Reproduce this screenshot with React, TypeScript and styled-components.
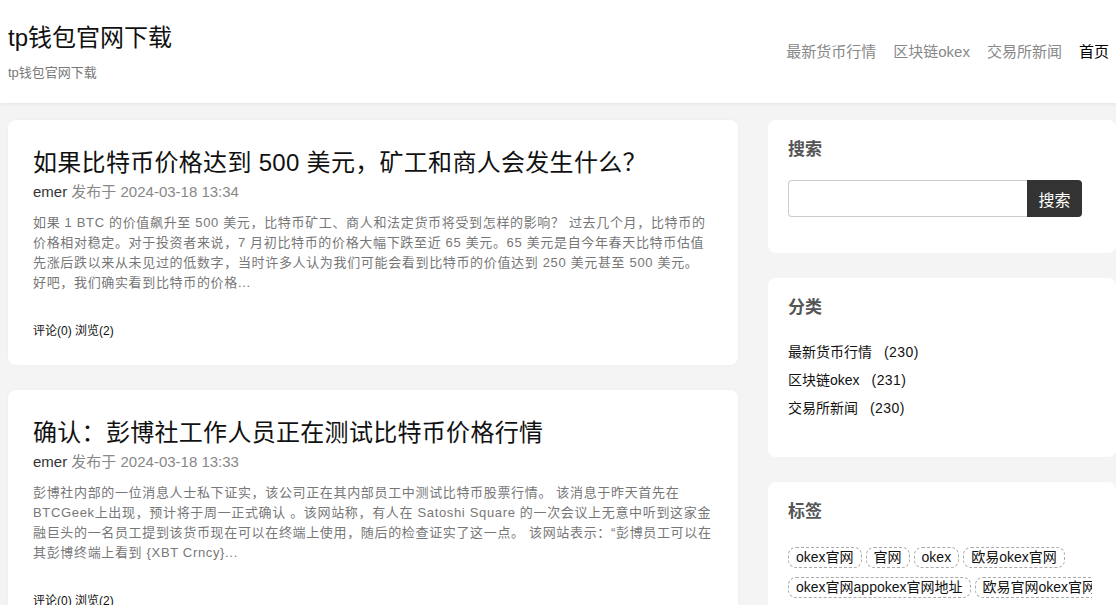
import * as React from "react";
import styled, { createGlobalStyle } from "styled-components";

const GlobalStyle = createGlobalStyle`
  html, body {
    margin: 0;
    padding: 0;
    background: #f4f4f4;
    font-family: "Liberation Sans", Arial, "Noto Sans CJK SC", sans-serif;
    color: #333;
  }
  * {
    box-sizing: border-box;
  }
`;

const Header = styled.header`
  display: flex;
  justify-content: space-between;
  align-items: center;
  height: 103px;
  padding: 0 7px 0 8px;
  background: #fff;
  box-shadow: 0 1px 4px rgba(0, 0, 0, 0.08);
`;

const Brand = styled.div`
  display: flex;
  flex-direction: column;
`;

const SiteTitle = styled.h1`
  margin: 0;
  font-size: 24px;
  font-weight: 400;
  line-height: 36px;
  color: #111;
`;

const SiteDesc = styled.p`
  margin: 7px 0 0;
  font-size: 13px;
  line-height: 20px;
  color: #777;
`;

const Nav = styled.nav`
  display: flex;
  gap: 17px;
  margin-top: 1px;
`;

const NavLink = styled.a<{ $active?: boolean }>`
  font-size: 15px;
  line-height: 20px;
  color: ${(p) => (p.$active ? "#000" : "#888")};
  text-decoration: none;
`;

const Layout = styled.div`
  display: grid;
  grid-template-columns: 730px 348px;
  gap: 30px;
  padding: 17px 0 0 8px;
`;

const Column = styled.div`
  display: flex;
  flex-direction: column;
  gap: 25px;
`;

const Card = styled.article`
  background: #fff;
  border-radius: 8px;
  padding: 25px 25px 26px;
  box-shadow: 0 0 4px rgba(0, 0, 0, 0.03);
`;

const PostTitle = styled.h2`
  margin: 0;
  font-size: 24px;
  font-weight: 400;
  letter-spacing: 0.3px;
  line-height: 36px;
  color: #111;
`;

const Meta = styled.div`
  font-size: 15px;
  line-height: 22px;
  color: #888;
`;

const Author = styled.span`
  color: #333;
`;

const Excerpt = styled.p`
  margin: 10px 0 0;
  font-size: 13px;
  letter-spacing: 0.66px;
  line-height: 20px;
  color: #777;
`;

const PostFooter = styled.div`
  margin-top: 30px;
  font-size: 12px;
  line-height: 16px;
  color: #111;
`;

const Widget = styled.section<{ $bottom?: number }>`
  background: #fff;
  border-radius: 8px;
  padding: 20px 20px ${(p) => p.$bottom ?? 35}px;
  overflow: hidden;
`;

const WidgetTitle = styled.h3`
  margin: 0;
  font-size: 17px;
  font-weight: 700;
  line-height: 20px;
  color: #555;
`;

const SearchForm = styled.form`
  display: flex;
  margin-top: 20px;
`;

const SearchInput = styled.input`
  width: 239px;
  height: 37px;
  border: 1px solid #ccc;
  border-right: none;
  border-radius: 4px 0 0 4px;
  outline: none;
  padding: 0 8px;
  font-size: 14px;
`;

const SearchButton = styled.button`
  width: 55px;
  height: 37px;
  border: none;
  border-radius: 0 4px 4px 0;
  background: #333;
  color: #fff;
  font-size: 16px;
  font-family: inherit;
  padding: 0;
`;

const CatList = styled.ul`
  list-style: none;
  margin: 20px 0 0;
  padding: 0;
`;

const CatItem = styled.li`
  font-size: 14px;
  line-height: 28px;
  color: #111;
`;

const CatCount = styled.span`
  margin-left: 12px;
  letter-spacing: 0.4px;
`;

const TagCloud = styled.div`
  margin-top: 25px;
  margin-right: 4px;
  overflow: hidden;
`;

const TagList = styled.div`
  display: flex;
  flex-wrap: wrap;
  gap: 9px 4px;
  width: 340px;
`;

const Tag = styled.a`
  display: inline-block;
  white-space: nowrap;
  padding: 0 7px;
  border: 1px dashed #aaa;
  border-radius: 8px;
  font-size: 14px;
  line-height: 19px;
  color: #111;
  text-decoration: none;
`;

const navItems = ["最新货币行情", "区块链okex", "交易所新闻", "首页"];

const posts = [
  {
    title: "如果比特币价格达到 500 美元，矿工和商人会发生什么？",
    time: "2024-03-18 13:34",
    excerpt:
      "如果 1 BTC 的价值飙升至 500 美元，比特币矿工、商人和法定货币将受到怎样的影响？ 过去几个月，比特币的价格相对稳定。对于投资者来说，7 月初比特币的价格大幅下跌至近 65 美元。65 美元是自今年春天比特币估值先涨后跌以来从未见过的低数字，当时许多人认为我们可能会看到比特币的价值达到 250 美元甚至 500 美元。 好吧，我们确实看到比特币的价格...",
  },
  {
    title: "确认：彭博社工作人员正在测试比特币价格行情",
    time: "2024-03-18 13:33",
    excerpt:
      "彭博社内部的一位消息人士私下证实，该公司正在其内部员工中测试比特币股票行情。 该消息于昨天首先在BTCGeek上出现，预计将于周一正式确认 。该网站称，有人在 Satoshi Square 的一次会议上无意中听到这家金融巨头的一名员工提到该货币现在可以在终端上使用，随后的检查证实了这一点。 该网站表示：“彭博员工可以在其彭博终端上看到 {XBT Crncy}...",
  },
];

const categories = [
  { name: "最新货币行情", count: 230 },
  { name: "区块链okex", count: 231 },
  { name: "交易所新闻", count: 230 },
];

const tags = ["okex官网", "官网", "okex", "欧易okex官网", "okex官网appokex官网地址", "欧易官网okex官网"];

export default function App() {
  return (
    <>
      <GlobalStyle />
      <Header>
        <Brand>
          <SiteTitle>tp钱包官网下载</SiteTitle>
          <SiteDesc>tp钱包官网下载</SiteDesc>
        </Brand>
        <Nav>
          {navItems.map((item, i) => (
            <NavLink key={item} href="#" $active={i === navItems.length - 1}>
              {item}
            </NavLink>
          ))}
        </Nav>
      </Header>
      <Layout>
        <Column>
          {posts.map((post) => (
            <Card key={post.title}>
              <PostTitle>{post.title}</PostTitle>
              <Meta>
                <Author>emer</Author> 发布于 {post.time}
              </Meta>
              <Excerpt>{post.excerpt}</Excerpt>
              <PostFooter>评论(0) 浏览(2)</PostFooter>
            </Card>
          ))}
        </Column>
        <Column>
          <Widget $bottom={36}>
            <WidgetTitle>搜索</WidgetTitle>
            <SearchForm onSubmit={(e) => e.preventDefault()}>
              <SearchInput type="text" />
              <SearchButton type="submit">搜索</SearchButton>
            </SearchForm>
          </Widget>
          <Widget>
            <WidgetTitle>分类</WidgetTitle>
            <CatList>
              {categories.map((c) => (
                <CatItem key={c.name}>
                  {c.name}
                  <CatCount>({c.count})</CatCount>
                </CatItem>
              ))}
            </CatList>
          </Widget>
          <Widget>
            <WidgetTitle>标签</WidgetTitle>
            <TagCloud>
              <TagList>
                {tags.map((t) => (
                  <Tag key={t} href="#">
                    {t}
                  </Tag>
                ))}
              </TagList>
            </TagCloud>
          </Widget>
        </Column>
      </Layout>
    </>
  );
}
